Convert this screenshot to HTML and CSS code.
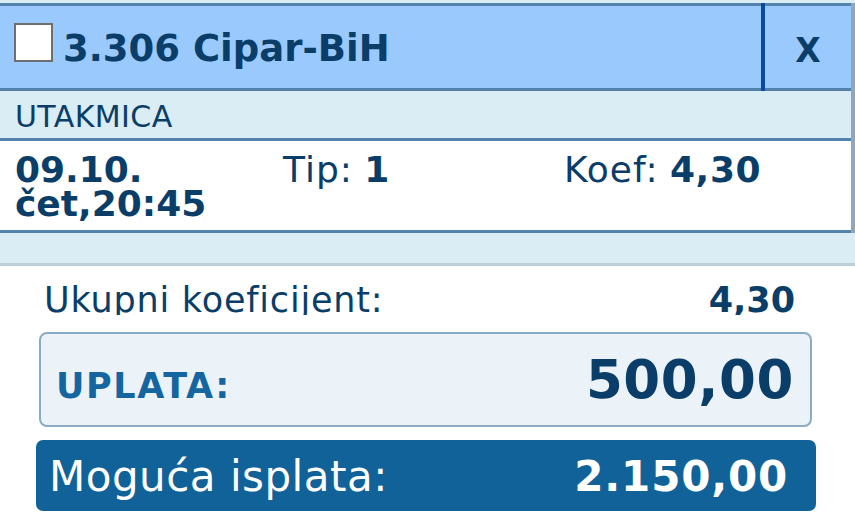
FILE: index.html
```html
<!DOCTYPE html>
<html lang="bs">
<head>
<meta charset="utf-8">
<title>Listić</title>
<link rel="stylesheet" href="styles.css">
</head>
<body>
<div class="strip-top"></div>
<div class="panel">
  <div class="header">
    <div class="head-main">
      <span class="check"></span>
      <span class="title">3.306 Cipar-BiH</span>
    </div>
    <div class="sep"></div>
    <div class="close">X</div>
  </div>
  <div class="label-row">UTAKMICA</div>
  <div class="details">
    <div class="date"><b>09.10.<br>čet,20:45</b></div>
    <div class="tip"><span class="reg">Tip:</span> <b>1</b></div>
    <div class="koef"><span class="reg">Koef:</span> <b>4,30</b></div>
  </div>
</div>
<div class="strip-bottom"></div>
<div class="summary">
  <div class="total-row">
    <span class="total-label">Ukupni koeficijent:</span>
    <b>4,30</b>
  </div>
  <div class="stake">
    <span class="stake-label">UPLATA:</span>
    <span class="stake-value">500,00</span>
  </div>
  <div class="payout">
    <span class="payout-label">Moguća isplata:</span>
    <b class="payout-value">2.150,00</b>
  </div>
</div>
</body>
</html>
```

FILE: styles.css
```css
* { box-sizing: border-box; }
html, body {
  margin: 0;
  padding: 0;
  background: #ffffff;
}
body {
  width: 855px;
  height: 523px;
  overflow: hidden;
  font-family: "DejaVu Sans", Verdana, sans-serif;
  color: #0b3d69;
}
.strip-top {
  height: 3px;
  background: #daecf4;
}
.panel {
  border-right: 4px solid #8ea7bf;
}
.header {
  display: flex;
  height: 88px;
  background: #99c9fd;
  border-top: 3px solid #5383ad;
  border-bottom: 3px solid #5383ad;
}
.head-main {
  flex: 1;
  display: flex;
  align-items: flex-start;
  padding-left: 14px;
}
.check {
  width: 39px;
  height: 39px;
  margin-top: 17px;
  background: #ffffff;
  border: 2px solid #6e6e6e;
  flex: none;
}
.title {
  margin-left: 10px;
  margin-top: 21px;
  font-size: 37px;
  line-height: 44px;
  font-weight: bold;
  white-space: nowrap;
}
.sep {
  width: 4px;
  background: #0a4a9a;
  margin-top: -3px;
  margin-bottom: -3px;
}
.close {
  width: 86px;
  text-align: center;
  font-size: 33px;
  font-weight: bold;
  line-height: 40px;
  padding-top: 25px;
}
.label-row {
  height: 47px;
  background: #daecf4;
  font-size: 30px;
  line-height: 43px;
  padding-top: 4px;
  padding-left: 15px;
  letter-spacing: 0.4px;
}
.details {
  display: grid;
  grid-template-columns: 268px 281px 1fr;
  height: 95px;
  background: #ffffff;
  border-top: 3px solid #5383ad;
  border-bottom: 3px solid #5383ad;
  padding-left: 15px;
  padding-top: 12px;
  font-size: 36px;
  line-height: 34px;
  white-space: nowrap;
}
.reg {
  letter-spacing: 1px;
}
.koef b {
  letter-spacing: 0.6px;
}
.strip-bottom {
  height: 33px;
  background: #daecf4;
  border-bottom: 3px solid #bccfd9;
}
.summary {
  display: flex;
  flex-direction: column;
}
.total-row {
  display: flex;
  justify-content: space-between;
  height: 35px;
  overflow: hidden;
  margin: 14px 60px 0 44px;
  font-size: 35px;
  line-height: 40px;
}
.total-label {
  letter-spacing: 0.8px;
}
.stake {
  display: flex;
  justify-content: space-between;
  align-items: baseline;
  width: 773px;
  height: 95px;
  margin: 17px 0 0 39px;
  padding: 15px 17px 0 15px;
  background: #ebf3f8;
  border: 2px solid #8aabc4;
  border-radius: 8px;
}
.stake-label {
  font-size: 35px;
  font-weight: bold;
  color: #1565a0;
  letter-spacing: 1.6px;
}
.stake-value {
  font-size: 53px;
  font-weight: bold;
  letter-spacing: 0.6px;
  margin-right: -1px;
}
.payout {
  display: flex;
  justify-content: space-between;
  width: 780px;
  height: 71px;
  margin: 13px 0 0 36px;
  padding: 2px 28px 0 13px;
  background: #12629a;
  border-radius: 7px;
  color: #ffffff;
  font-size: 42px;
  line-height: 69px;
}
.payout-label {
  letter-spacing: 0.5px;
}
.payout-value {
  letter-spacing: 0.8px;
}
```
